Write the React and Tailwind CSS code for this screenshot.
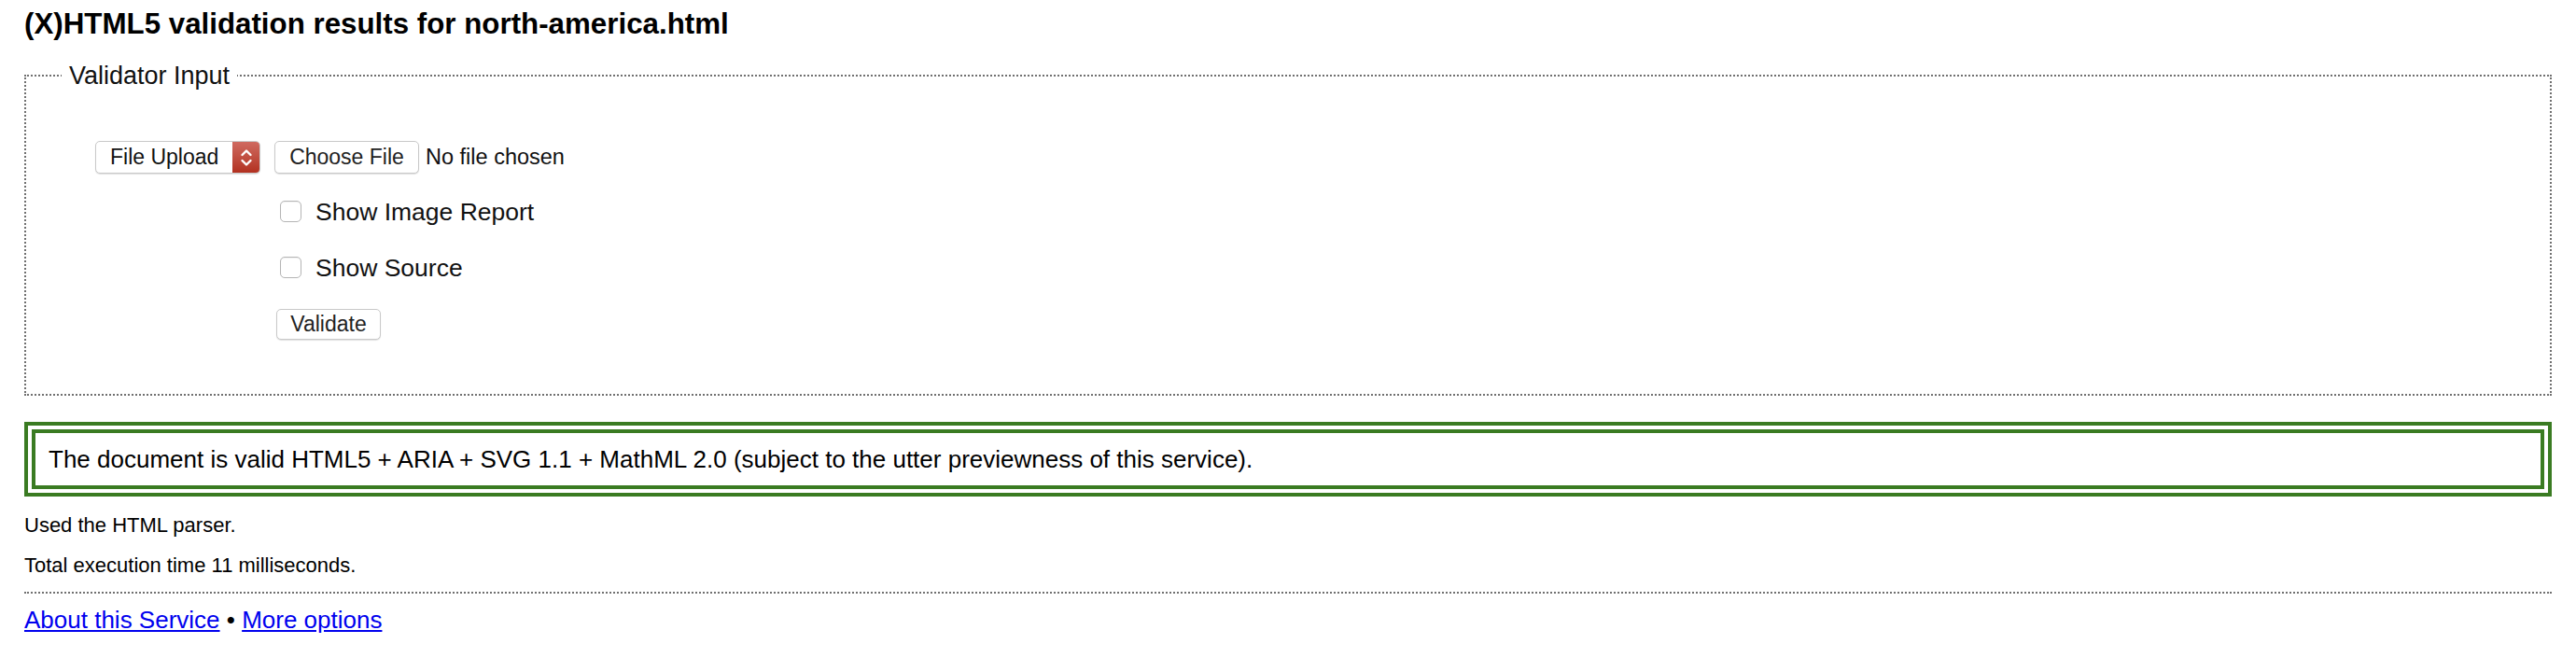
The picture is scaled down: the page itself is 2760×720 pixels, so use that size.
import React from 'react';

const Chevrons = () => (
  <svg width="16" height="26" viewBox="0 0 16 26" fill="none" stroke="white" strokeWidth="2.4" strokeLinecap="round" strokeLinejoin="round">
    <path d="M3.5 10 L8 5.5 L12.5 10" />
    <path d="M3.5 16 L8 20.5 L12.5 16" />
  </svg>
);

const Checkbox = ({ label }) => (
  <label className="flex items-center h-[23px]">
    <input type="checkbox" className="appearance-none ml-[6px] w-[23px] h-[23px] rounded-[5px] border border-[#b5b5b5] bg-white shadow-[inset_0_1px_1px_rgba(0,0,0,0.06)]" />
    <span className="ml-[15px] text-[26.5px] leading-[30px] text-[#111]">{label}</span>
  </label>
);

export default function App() {
  return (
    <div className="min-h-screen bg-white text-black font-['Liberation_Sans',Arial,sans-serif] px-[26px] pb-10">
      <h1 className="pt-[8px] text-[31.3px] leading-[36px] font-bold">(X)HTML5 validation results for north-america.html</h1>

      <fieldset className="mt-[21px] border-2 border-dotted border-[#707070]">
        <legend className="ml-[38px] px-2 text-[27px] leading-[32px] text-[#111]">Validator Input</legend>
        <div className="pl-[74px] pt-[54px] pb-[58px]">
          {/* file row */}
          <div className="flex items-center">
            <div className="flex h-[35px] w-[177px] rounded-[5px] border border-[#c9c9c9] bg-white shadow-[0_1px_1px_rgba(0,0,0,0.12)] overflow-hidden">
              <span className="flex-1 pl-[15px] text-[23px] leading-[33px] text-[#111]">File Upload</span>
              <span className="w-[29px] flex items-center justify-center bg-gradient-to-b from-[#cf6a60] to-[#b2301f]">
                <Chevrons />
              </span>
            </div>
            <button className="ml-[15px] h-[35px] w-[155px] rounded-[5px] border border-[#c9c9c9] bg-white shadow-[0_1px_1px_rgba(0,0,0,0.12)] text-[23px] leading-[33px] text-[#222]">
              Choose File
            </button>
            <span className="ml-[7px] text-[23.5px] leading-[33px] text-[#111]">No file chosen</span>
          </div>

          <div className="pl-[192px]">
            <div className="mt-[29px]">
              <Checkbox label="Show Image Report" />
            </div>
            <div className="mt-[37px]">
              <Checkbox label="Show Source" />
            </div>
            <button className="mt-[33px] ml-[2px] h-[33px] w-[112px] rounded-[5px] border border-[#c9c9c9] bg-white shadow-[0_1px_1px_rgba(0,0,0,0.12)] text-[23px] leading-[31px] text-[#222]">
              Validate
            </button>
          </div>
        </div>
      </fieldset>

      <div className="mt-[28px] border-[12px] border-double border-[#3a7b22] px-[14px] py-[13px] text-[26px] leading-[30px]">
        The document is valid HTML5 + ARIA + SVG 1.1 + MathML 2.0 (subject to the utter previewness of this service).
      </div>

      <p className="mt-[18px] text-[22px] leading-[26px]">Used the HTML parser.</p>
      <p className="mt-[17px] text-[22px] leading-[26px]">Total execution time 11 milliseconds.</p>

      <div className="mt-[15px] border-t-2 border-dotted border-[#707070]" />

      <p className="mt-[13px] text-[26px] leading-[30px]">
        <a href="#" className="text-[#0000ee] underline">About this Service</a>
        {' • '}
        <a href="#" className="text-[#0000ee] underline">More options</a>
      </p>
    </div>
  );
}
